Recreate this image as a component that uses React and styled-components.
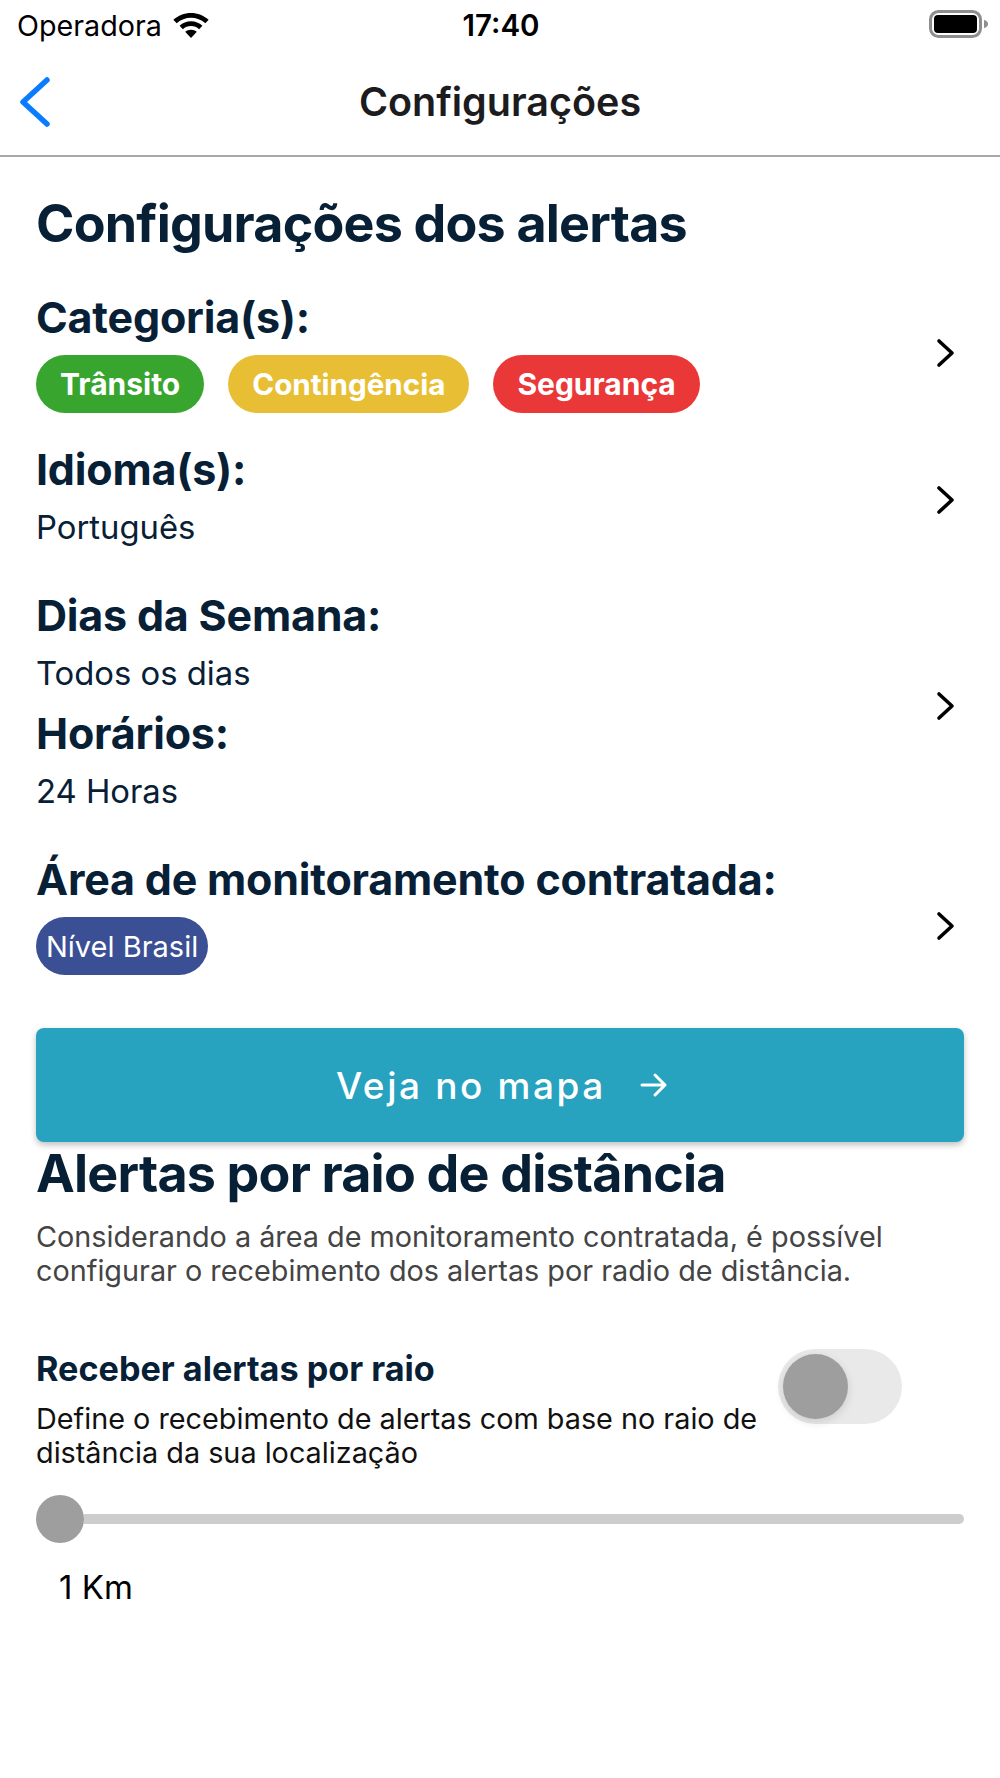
import styled, { createGlobalStyle } from "styled-components";

const GlobalStyle = createGlobalStyle`
  html, body {
    margin: 0;
    padding: 0;
    background: #fff;
  }
  * {
    box-sizing: border-box;
  }
`;

const Screen = styled.div`
  width: 1000px;
  height: 1778px;
  overflow: hidden;
  background: #fff;
  font-family: Inter, "Noto Sans", sans-serif;
  color: #082036;
`;

const StatusBar = styled.div`
  height: 50px;
  padding: 0 11px 0 17px;
  display: grid;
  grid-template-columns: 1fr auto 1fr;
  align-items: center;
  color: #000;
`;

const Carrier = styled.div`
  display: flex;
  align-items: center;
  gap: 10px;
  font-size: 28.7px;
`;

const Clock = styled.div`
  margin-right: 4px;
  font-size: 29.5px;
  font-weight: 600;
`;

const Battery = styled.svg`
  justify-self: end;
  margin-bottom: 3px;
`;

const NavBar = styled.div`
  height: 107px;
  padding: 0 18px 2px;
  display: grid;
  grid-template-columns: 1fr auto 1fr;
  align-items: center;
  border-bottom: 2px solid #a8a8a8;
`;

const NavTitle = styled.div`
  font-size: 39.5px;
  font-weight: 600;
  color: #1c1c1e;
`;

const Content = styled.div`
  padding: 0 36px;
`;

const SectionTitle = styled.h1`
  margin: ${(p) => p.$top}px 0 0;
  font-size: 52px;
  line-height: 62px;
  font-weight: 700;
  letter-spacing: -0.8px;
`;

const Row = styled.div`
  display: flex;
  justify-content: space-between;
  align-items: center;
  padding-right: 8px;
  margin-top: ${(p) => p.$top}px;
`;

const RowBody = styled.div`
  padding-bottom: ${(p) => p.$bottom || 0}px;
`;

const RowLabel = styled.div`
  font-size: 43px;
  line-height: 50px;
  font-weight: 700;
  letter-spacing: -0.2px;
  margin-top: ${(p) => p.$top || 0}px;
`;

const RowValue = styled.div`
  font-size: 32.8px;
  line-height: 40px;
  margin-top: 13px;
`;

const Chips = styled.div`
  display: flex;
  gap: 24px;
  margin-top: 13px;
`;

const Chip = styled.span`
  height: 58px;
  padding: 0 ${(p) => p.$pad || 24}px;
  border-radius: 29px;
  display: flex;
  align-items: center;
  background: ${(p) => p.$color};
  color: #fff;
  font-size: ${(p) => p.$size || 30}px;
  font-weight: ${(p) => p.$weight || 700};
`;

const MapButton = styled.div`
  height: 114px;
  margin-top: 30px;
  padding-left: 4px;
  display: flex;
  align-items: center;
  justify-content: center;
  gap: 34px;
  border-radius: 8px;
  background: #27a2bf;
  color: #fff;
  font-size: 37px;
  font-weight: 500;
  letter-spacing: 2.6px;
  box-shadow: 0 3px 6px rgba(0, 0, 0, 0.25);
`;

const Lead = styled.p`
  margin: 15px 0 0;
  font-size: 28.8px;
  line-height: 34px;
  color: #444;
`;

const ToggleRow = styled.div`
  display: flex;
  justify-content: space-between;
  align-items: flex-start;
  margin-top: 61px;
`;

const ToggleText = styled.div`
  width: 730px;
`;

const ToggleTitle = styled.div`
  font-size: 34.2px;
  line-height: 40px;
  font-weight: 700;
`;

const ToggleHint = styled.div`
  margin-top: 13px;
  font-size: 28.8px;
  line-height: 34px;
  color: #111;
`;

const Toggle = styled.div`
  width: 124px;
  height: 75px;
  margin-right: 62px;
  padding: 5px;
  border-radius: 38px;
  background: #e9e9ea;
`;

const ToggleKnob = styled.div`
  width: 65px;
  height: 65px;
  border-radius: 50%;
  background: #9e9e9e;
  box-shadow: 0 3px 10px rgba(0, 0, 0, 0.12);
`;

const Slider = styled.div`
  height: 48px;
  margin-top: 25px;
  display: flex;
  align-items: center;
`;

const SliderThumb = styled.div`
  width: 48px;
  height: 48px;
  border-radius: 50%;
  background: #9e9e9e;
  flex: none;
`;

const SliderTrack = styled.div`
  flex: 1;
  height: 10px;
  border-radius: 0 5px 5px 0;
  background: #cdcdcd;
`;

const SliderValue = styled.div`
  margin: 24px 0 0 23px;
  font-size: 33px;
  line-height: 40px;
  color: #000;
`;

const Chevron = () => (
  <svg width="20" height="30" viewBox="0 0 20 30" fill="none">
    <path d="M3 3l13 12L3 27" stroke="#000" strokeWidth="3.6" strokeLinecap="round" strokeLinejoin="round" />
  </svg>
);

const App = () => {
  return (
    <Screen>
      <GlobalStyle />
      <StatusBar>
        <Carrier>
          Operadora
          <svg width="38" height="27" viewBox="0 0 36 26">
            <path d="M18 1C11.500 1 5.800 3.400 1 7.500l3.200 3.300C8.200 7.500 12.900 5.600 18 5.600s9.800 1.900 13.800 5.200L35 7.500C30.200 3.400 24.500 1 18 1z" fill="#000" />
            <path d="M18 9c-4.200 0-8 1.600-11 4.200l3.200 3.300c2.100-1.800 4.800-2.900 7.800-2.900s5.700 1.100 7.800 2.900l3.200-3.300C26 10.600 22.200 9 18 9z" fill="#000" />
            <path d="M18 17c-2.200 0-4.200.8-5.600 2.100L18 25l5.600-5.900C22.200 17.800 20.200 17 18 17z" fill="#000" />
          </svg>
        </Carrier>
        <Clock>17:40</Clock>
        <Battery width="60" height="28" viewBox="0 0 60 28">
          <rect x="1.500" y="1.500" width="50" height="25" rx="8" fill="none" stroke="#8e8e8e" strokeWidth="3" />
          <rect x="5" y="5" width="43" height="18" rx="4" fill="#000" />
          <path d="M55 10c2.500.5 4 2 4 4s-1.500 3.500-4 4z" fill="#8e8e8e" />
        </Battery>
      </StatusBar>

      <NavBar>
        <svg width="34" height="52" viewBox="0 0 34 52" fill="none">
          <path d="M29 4L5 26l24 22" stroke="#0a7cff" strokeWidth="5.500" strokeLinecap="round" strokeLinejoin="round" />
        </svg>
        <NavTitle>Configurações</NavTitle>
      </NavBar>

      <Content>
        <SectionTitle $top={36}>Configurações dos alertas</SectionTitle>

        <Row $top={37}>
          <RowBody>
            <RowLabel>Categoria(s):</RowLabel>
            <Chips>
              <Chip $color="#38a52f">Trânsito</Chip>
              <Chip $color="#e8bf34" $size={29.6}>Contingência</Chip>
              <Chip $color="#ea3737">Segurança</Chip>
            </Chips>
          </RowBody>
          <Chevron />
        </Row>

        <Row $top={31}>
          <RowBody $bottom={9}>
            <RowLabel>Idioma(s):</RowLabel>
            <RowValue>Português</RowValue>
          </RowBody>
          <Chevron />
        </Row>

        <Row $top={34}>
          <RowBody $bottom={11}>
            <RowLabel>Dias da Semana:</RowLabel>
            <RowValue>Todos os dias</RowValue>
            <RowLabel $top={15}>Horários:</RowLabel>
            <RowValue>24 Horas</RowValue>
          </RowBody>
          <Chevron />
        </Row>

        <Row $top={32}>
          <RowBody $bottom={23}>
            <RowLabel>Área de monitoramento contratada:</RowLabel>
            <Chips>
              <Chip $color="#3a4f94" $pad={10} $size={29} $weight={400}>Nível Brasil</Chip>
            </Chips>
          </RowBody>
          <Chevron />
        </Row>

        <MapButton>
          Veja no mapa
          <svg width="28" height="26" viewBox="0 0 28 26" fill="none">
            <path d="M2 13h23M15 3l10 10-10 10" stroke="#fff" strokeWidth="3" strokeLinecap="round" strokeLinejoin="round" />
          </svg>
        </MapButton>

        <SectionTitle $top={1}>Alertas por raio de distância</SectionTitle>
        <Lead>
          Considerando a área de monitoramento contratada, é possível
          <br />
          configurar o recebimento dos alertas por radio de distância.
        </Lead>

        <ToggleRow>
          <ToggleText>
            <ToggleTitle>Receber alertas por raio</ToggleTitle>
            <ToggleHint>
              Define o recebimento de alertas com base no raio de
              <br />
              distância da sua localização
            </ToggleHint>
          </ToggleText>
          <Toggle>
            <ToggleKnob />
          </Toggle>
        </ToggleRow>

        <Slider>
          <SliderThumb />
          <SliderTrack />
        </Slider>
        <SliderValue>1 Km</SliderValue>
      </Content>
    </Screen>
  );
};

export default App;
